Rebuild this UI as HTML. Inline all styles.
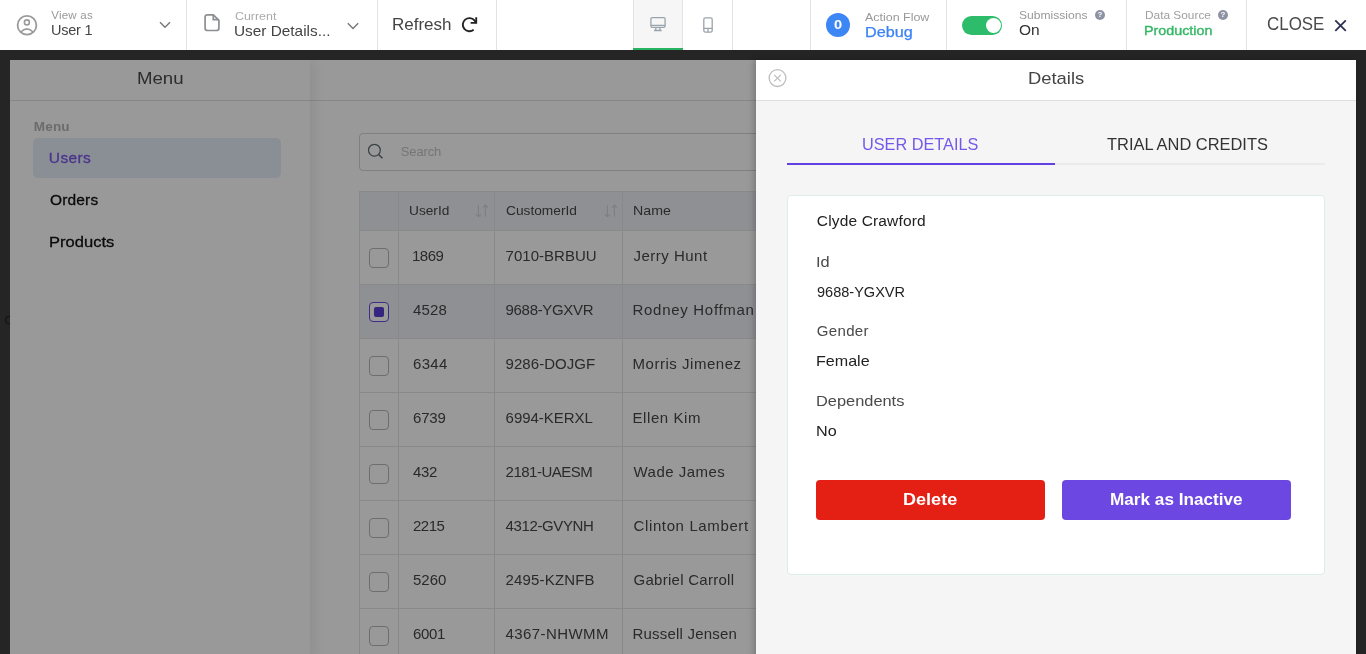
<!DOCTYPE html>
<html><head><meta charset="utf-8"><title>Details</title>
<style>
*{box-sizing:border-box}
html,body{margin:0;padding:0}
body{width:1366px;height:654px;overflow:hidden;position:relative;background:#252525;font-family:"Liberation Sans",sans-serif}
.t{position:absolute;white-space:nowrap;line-height:1}
.abs{position:absolute}
.vd{position:absolute;top:0;width:1px;height:50px;background:#e3e3e3}
</style></head><body>
<div class="abs" style="left:0;top:0;width:1366px;height:654px;overflow:hidden;background:#252525;will-change:transform">

<div class="abs" style="left:0;top:0;width:1366px;height:50px;background:#fff">
<div class="vd" style="left:186px"></div>
<div class="vd" style="left:377px"></div>
<div class="vd" style="left:496px"></div>
<div class="vd" style="left:732px"></div>
<div class="vd" style="left:810px"></div>
<div class="vd" style="left:946px"></div>
<div class="vd" style="left:1126px"></div>
<div class="vd" style="left:1246px"></div>
<div class="abs" style="left:633px;top:0;width:50px;height:50px;background:#f6f6f6;border-left:1px solid #e2e2ea;border-right:1px solid #e3e3e3"></div>
<div class="abs" style="left:633px;top:48px;width:50px;height:2px;background:#27b35f"></div>
</div>
<svg class="abs" style="left:16px;top:14px" width="22" height="23" viewBox="16 14 22 23">
<circle cx="27" cy="25.3" r="9.4" fill="none" stroke="#9a9a9a" stroke-width="1.8"/>
<circle cx="26.9" cy="22.4" r="2.5" fill="none" stroke="#9a9a9a" stroke-width="1.6"/>
<path d="M20.6 32.2 Q26.9 25.6 33.3 32.2" fill="none" stroke="#9a9a9a" stroke-width="1.6"/>
</svg>
<div class="t" style="left:51.20px;top:10.22px;font-size:11.5px;font-weight:400;color:#999;letter-spacing:0.248px;">View as</div>
<div class="t" style="left:51.00px;top:22.68px;font-size:14.5px;font-weight:400;color:#444;letter-spacing:-0.229px;">User 1</div>
<svg class="abs" style="left:158px;top:20px" width="14" height="11" viewBox="158 20 14 11"><path d="M160 22.3 L165 27.3 L170 22.3" fill="none" stroke="#777" stroke-width="1.4"/></svg>
<svg class="abs" style="left:202px;top:12px" width="20" height="22" viewBox="202 12 20 22">
<path d="M207.5 14.9 H213.4 L218.9 20.3 V28.2 Q218.9 30.5 216.6 30.5 H207.5 Q205.1 30.5 205.1 28.2 V17.2 Q205.1 14.9 207.5 14.9 Z" fill="none" stroke="#8b8f93" stroke-width="1.7" stroke-linejoin="round"/>
<path d="M213.3 14.9 V19.6 H218.9" fill="none" stroke="#8b8f93" stroke-width="1.7"/>
</svg>
<div class="t" style="left:235.30px;top:10.65px;font-size:11px;font-weight:400;color:#aaa;transform:scaleX(1.1277);transform-origin:0 0;">Current</div>
<div class="t" style="left:233.94px;top:23.68px;font-size:14.5px;font-weight:400;color:#444;transform:scaleX(1.0593);transform-origin:0 0;">User Details...</div>
<svg class="abs" style="left:341px;top:20px" width="20" height="13" viewBox="341 20 20 13"><path d="M347.8 23.3 L353 28.5 L358.2 23.3" fill="none" stroke="#777" stroke-width="1.4"/></svg>
<div class="t" style="left:392.00px;top:15.55px;font-size:17px;font-weight:400;color:#444;letter-spacing:-0.012px;">Refresh</div>
<svg class="abs" style="left:458px;top:14px" width="24" height="22" viewBox="458 14 24 22">
<path d="M473.64 29.76 A6.6 6.6 0 1 1 474.46 20.46 L476.2 22.9" fill="none" stroke="#222" stroke-width="1.9"/>
<path d="M476.2 17.2 V22.9 H470.6" fill="none" stroke="#222" stroke-width="1.9" stroke-linejoin="miter"/>
</svg>
<svg class="abs" style="left:648px;top:15px" width="20" height="18" viewBox="648 15 20 18">
<rect x="650.9" y="17.6" width="14.2" height="9.7" rx="1.3" fill="none" stroke="#9aa4ac" stroke-width="1.3"/>
<path d="M650.9 25.3 H665.1 M655.8 27.6 V30.2 M659.9 27.6 V30.2 M654 30.5 H661.7" fill="none" stroke="#9aa4ac" stroke-width="1.3"/>
</svg>
<svg class="abs" style="left:701px;top:15px" width="14" height="20" viewBox="701 15 14 20">
<rect x="703.8" y="17.9" width="8.4" height="14.3" rx="1.6" fill="none" stroke="#9aa4ac" stroke-width="1.3"/>
<path d="M703.8 28.3 H712.2 M708 28.3 V32.2" fill="none" stroke="#9aa4ac" stroke-width="1.3"/>
</svg>
<div class="abs" style="left:826px;top:13px;width:24px;height:24px;border-radius:12px;background:#3d86f6"></div>
<div class="t" style="left:826px;top:18.6px;width:24px;text-align:center;font-size:12px;font-weight:700;color:#fff;transform:scaleX(1.22)">0</div>
<div class="t" style="left:865.20px;top:12.22px;font-size:11.5px;font-weight:400;color:#999;transform:scaleX(1.0826);transform-origin:0 0;">Action Flow</div>
<div class="t" style="left:865.47px;top:24.84px;font-size:14.3px;font-weight:400;color:#3b82f6;transform:scaleX(1.1341);transform-origin:0 0;-webkit-text-stroke:0.25px #3b82f6;">Debug</div>
<div class="abs" style="left:962px;top:15.5px;width:40px;height:19.5px;border-radius:10px;background:#2dbd6a"></div>
<div class="abs" style="left:985.8px;top:17.8px;width:15.6px;height:15.6px;border-radius:8px;background:#fff"></div>
<div class="t" style="left:1019.40px;top:9.65px;font-size:11px;font-weight:400;color:#999;transform:scaleX(1.0993);transform-origin:0 0;">Submissions</div>
<div class="t" style="left:1019.00px;top:22.68px;font-size:14.5px;font-weight:400;color:#333;transform:scaleX(1.0685);transform-origin:0 0;">On</div>
<div class="abs" style="left:1094.6px;top:9.5px;width:10.6px;height:10.6px;border-radius:6px;background:#8e93a4"></div><div class="t" style="left:1094.6px;top:10.9px;width:10.6px;text-align:center;font-size:8px;font-weight:700;color:#fff">?</div>
<div class="t" style="left:1145.20px;top:9.65px;font-size:11px;font-weight:400;color:#a0a0a0;transform:scaleX(1.0782);transform-origin:0 0;">Data Source</div>
<div class="t" style="left:1144.14px;top:23.52px;font-size:13.5px;font-weight:400;color:#35b865;transform:scaleX(1.0598);transform-origin:0 0;-webkit-text-stroke:0.4px #35b865;">Production</div>
<div class="abs" style="left:1217.7px;top:9.9px;width:10.6px;height:10.6px;border-radius:6px;background:#8e93a4"></div><div class="t" style="left:1217.7px;top:11.3px;width:10.6px;text-align:center;font-size:8px;font-weight:700;color:#fff">?</div>
<div class="t" style="left:1266.80px;top:16.12px;font-size:17.5px;font-weight:400;color:#4a4a4a;transform:scaleX(0.9667);transform-origin:0 0;">CLOSE</div>
<svg class="abs" style="left:1332px;top:18px" width="16" height="16" viewBox="1332 18 16 16"><path d="M1335.3 20.3 L1345.8 30.8 M1345.8 20.3 L1335.3 30.8" fill="none" stroke="#2c3152" stroke-width="1.8"/></svg>
<svg class="abs" style="left:0;top:312px" width="12" height="16" viewBox="0 312 12 16"><path d="M10 316.3 Q5.6 316.3 5.6 320 Q5.6 323.7 10 323.7" fill="none" stroke="#141414" stroke-width="1.2"/></svg>
<div class="abs" style="left:10px;top:60px;width:1346px;height:600px;background:#fff;overflow:hidden">
<div class="abs" style="left:0;top:40px;width:1346px;height:1px;background:#e2e2e2"></div>
<div class="abs" style="left:349px;top:73px;width:700px;height:38px;border:1px solid #d4d4d4;border-radius:4px;background:#fff"></div>
<div class="abs" style="left:349px;top:131px;width:900px;height:39px;background:#eef1f5"></div>
<div class="abs" style="left:349px;top:224px;width:900px;height:54px;background:#edf1f7"></div>
<div class="abs" style="left:349px;top:131px;width:900px;height:1px;background:#e4e4e4"></div>
<div class="abs" style="left:349px;top:170px;width:900px;height:1px;background:#e4e4e4"></div>
<div class="abs" style="left:349px;top:224px;width:900px;height:1px;background:#e4e4e4"></div>
<div class="abs" style="left:349px;top:278px;width:900px;height:1px;background:#e4e4e4"></div>
<div class="abs" style="left:349px;top:332px;width:900px;height:1px;background:#e4e4e4"></div>
<div class="abs" style="left:349px;top:386px;width:900px;height:1px;background:#e4e4e4"></div>
<div class="abs" style="left:349px;top:440px;width:900px;height:1px;background:#e4e4e4"></div>
<div class="abs" style="left:349px;top:494px;width:900px;height:1px;background:#e4e4e4"></div>
<div class="abs" style="left:349px;top:548px;width:900px;height:1px;background:#e4e4e4"></div>
<div class="abs" style="left:349px;top:602px;width:900px;height:1px;background:#e4e4e4"></div>
<div class="abs" style="left:349px;top:131px;width:1px;height:600px;background:#e4e4e4"></div>
<div class="abs" style="left:388px;top:131px;width:1px;height:600px;background:#e4e4e4"></div>
<div class="abs" style="left:484px;top:131px;width:1px;height:600px;background:#e4e4e4"></div>
<div class="abs" style="left:612px;top:131px;width:1px;height:600px;background:#e4e4e4"></div>
<div class="abs" style="left:0;top:0;width:300px;height:600px;background:#fff;box-shadow:2px 0 14px rgba(0,0,0,0.09)"></div>
<div class="abs" style="left:0;top:40px;width:300px;height:1px;background:#e2e2e2"></div>
<div class="abs" style="left:23px;top:78px;width:248px;height:40px;border-radius:5px;background:#e7edf8"></div>
</div>
<div class="t" style="left:136.52px;top:70.38px;font-size:17.2px;font-weight:400;color:#4a4a4a;transform:scaleX(1.0836);transform-origin:0 0;">Menu</div>
<div class="t" style="left:33.80px;top:119.53px;font-size:13.5px;font-weight:700;color:#b4b4b4;letter-spacing:0.167px;">Menu</div>
<div class="t" style="left:48.80px;top:149.82px;font-size:15.5px;font-weight:400;color:#7a5ae8;letter-spacing:0.394px;-webkit-text-stroke:0.35px #7a5ae8;">Users</div>
<div class="t" style="left:50.00px;top:191.82px;font-size:15.5px;font-weight:400;color:#111;letter-spacing:0.156px;-webkit-text-stroke:0.3px #111;">Orders</div>
<div class="t" style="left:48.93px;top:233.82px;font-size:15.5px;font-weight:400;color:#111;transform:scaleX(1.0676);transform-origin:0 0;-webkit-text-stroke:0.3px #111;">Products</div>
<svg class="abs" style="left:364px;top:141px" width="22" height="20" viewBox="364 141 22 20">
<circle cx="374.4" cy="150.2" r="5.9" fill="none" stroke="#5f6b75" stroke-width="1.2"/>
<path d="M378.6 154.5 L382.4 158.3" fill="none" stroke="#5f6b75" stroke-width="1.5"/>
</svg>
<div class="t" style="left:400.80px;top:144.95px;font-size:13px;font-weight:400;color:#c4c4c4;letter-spacing:-0.152px;">Search</div>
<div class="t" style="left:408.65px;top:203.95px;font-size:13px;font-weight:400;color:#474747;transform:scaleX(1.0524);transform-origin:0 0;">UserId</div>
<div class="t" style="left:505.60px;top:203.95px;font-size:13px;font-weight:400;color:#474747;transform:scaleX(1.0559);transform-origin:0 0;">CustomerId</div>
<div class="t" style="left:632.61px;top:203.95px;font-size:13px;font-weight:400;color:#474747;transform:scaleX(1.0913);transform-origin:0 0;">Name</div>
<svg class="abs" style="left:475px;top:203px" width="16" height="16" viewBox="475 203 16 16"><path d="M478.4 205 V216.8 M475.9 214.2 L478.4 216.8 L480.9 214.2 M485.4 205 V216.8 M482.9 207.6 L485.4 205 L487.9 207.6" fill="none" stroke="#cfd2d6" stroke-width="1.1"/></svg>
<svg class="abs" style="left:604px;top:203px" width="16" height="16" viewBox="604 203 16 16"><path d="M607.4 205 V216.8 M604.9 214.2 L607.4 216.8 L609.9 214.2 M614.4 205 V216.8 M611.9 207.6 L614.4 205 L616.9 207.6" fill="none" stroke="#cfd2d6" stroke-width="1.1"/></svg>
<div class="abs" style="left:369px;top:248px;width:20px;height:20px;border:1.5px solid #b8b8b8;border-radius:4px;background:#fff"></div>
<div class="t" style="left:412.00px;top:248.25px;font-size:15px;color:#474747;letter-spacing:-0.500px">1869</div>
<div class="t" style="left:505.60px;top:248.25px;font-size:15px;color:#474747;letter-spacing:0.018px">7010-BRBUU</div>
<div class="t" style="left:633.50px;top:248.25px;font-size:15px;color:#474747;letter-spacing:0.487px">Jerry Hunt</div>
<div class="abs" style="left:369px;top:302px;width:20px;height:20px;border:1.5px solid #6b48e0;border-radius:4px;background:#fff"></div>
<div class="abs" style="left:374px;top:307px;width:10px;height:10px;border-radius:2px;background:#5a3ed6"></div>
<div class="t" style="left:413.00px;top:302.25px;font-size:15px;color:#474747;letter-spacing:0.158px">4528</div>
<div class="t" style="left:505.60px;top:302.25px;font-size:15px;color:#474747;letter-spacing:-0.327px">9688-YGXVR</div>
<div class="t" style="left:632.50px;top:302.25px;font-size:15px;color:#474747;letter-spacing:0.704px">Rodney Hoffman</div>
<div class="abs" style="left:369px;top:356px;width:20px;height:20px;border:1.5px solid #b8b8b8;border-radius:4px;background:#fff"></div>
<div class="t" style="left:413.00px;top:356.25px;font-size:15px;color:#474747;letter-spacing:0.324px">6344</div>
<div class="t" style="left:505.60px;top:356.25px;font-size:15px;color:#474747;letter-spacing:0.041px">9286-DOJGF</div>
<div class="t" style="left:632.50px;top:356.25px;font-size:15px;color:#474747;letter-spacing:0.532px">Morris Jimenez</div>
<div class="abs" style="left:369px;top:410px;width:20px;height:20px;border:1.5px solid #b8b8b8;border-radius:4px;background:#fff"></div>
<div class="t" style="left:413.00px;top:410.25px;font-size:15px;color:#474747;letter-spacing:-0.176px">6739</div>
<div class="t" style="left:505.60px;top:410.25px;font-size:15px;color:#474747;letter-spacing:-0.023px">6994-KERXL</div>
<div class="t" style="left:632.50px;top:410.25px;font-size:15px;color:#474747;letter-spacing:0.580px">Ellen Kim</div>
<div class="abs" style="left:369px;top:464px;width:20px;height:20px;border:1.5px solid #b8b8b8;border-radius:4px;background:#fff"></div>
<div class="t" style="left:413.00px;top:464.25px;font-size:15px;color:#474747;letter-spacing:-0.342px">432</div>
<div class="t" style="left:505.60px;top:464.25px;font-size:15px;color:#474747;letter-spacing:-0.500px">2181-UAESM</div>
<div class="t" style="left:633.50px;top:464.25px;font-size:15px;color:#474747;letter-spacing:0.481px">Wade James</div>
<div class="abs" style="left:369px;top:518px;width:20px;height:20px;border:1.5px solid #b8b8b8;border-radius:4px;background:#fff"></div>
<div class="t" style="left:413.00px;top:518.25px;font-size:15px;color:#474747;letter-spacing:-0.500px">2215</div>
<div class="t" style="left:505.60px;top:518.25px;font-size:15px;color:#474747;letter-spacing:-0.386px">4312-GVYNH</div>
<div class="t" style="left:633.50px;top:518.25px;font-size:15px;color:#474747;letter-spacing:0.627px">Clinton Lambert</div>
<div class="abs" style="left:369px;top:572px;width:20px;height:20px;border:1.5px solid #b8b8b8;border-radius:4px;background:#fff"></div>
<div class="t" style="left:413.00px;top:572.25px;font-size:15px;color:#474747;letter-spacing:-0.009px">5260</div>
<div class="t" style="left:505.60px;top:572.25px;font-size:15px;color:#474747;letter-spacing:0.164px">2495-KZNFB</div>
<div class="t" style="left:633.50px;top:572.25px;font-size:15px;color:#474747;letter-spacing:0.274px">Gabriel Carroll</div>
<div class="abs" style="left:369px;top:626px;width:20px;height:20px;border:1.5px solid #b8b8b8;border-radius:4px;background:#fff"></div>
<div class="t" style="left:413.00px;top:626.25px;font-size:15px;color:#474747;letter-spacing:-0.342px">6001</div>
<div class="t" style="left:505.60px;top:626.25px;font-size:15px;color:#474747;letter-spacing:0.413px">4367-NHWMM</div>
<div class="t" style="left:632.50px;top:626.25px;font-size:15px;color:#474747;letter-spacing:0.210px">Russell Jensen</div>
<div class="abs" style="left:10px;top:60px;width:1346px;height:600px;background:rgba(0,0,0,0.4)"></div>
<div class="abs" style="left:756px;top:60px;width:600px;height:600px;background:#f5f5f5;box-shadow:-2px 0 6px rgba(0,0,0,0.22)"></div>
<div class="abs" style="left:756px;top:60px;width:600px;height:41px;background:#fff;border-bottom:1px solid #dedede"></div>
<svg class="abs" style="left:766px;top:67px" width="23" height="23" viewBox="766 67 23 23">
<circle cx="777.5" cy="78.1" r="8.4" fill="none" stroke="#bdbdbd" stroke-width="1.3"/>
<path d="M774.2 74.8 L780.8 81.4 M780.8 74.8 L774.2 81.4" fill="none" stroke="#bdbdbd" stroke-width="1.2"/>
</svg>
<div class="t" style="left:1027.92px;top:69.55px;font-size:17px;font-weight:400;color:#444;transform:scaleX(1.0820);transform-origin:0 0;">Details</div>
<div class="abs" style="left:787px;top:163px;width:538px;height:2px;background:#ebebeb"></div>
<div class="abs" style="left:787px;top:163px;width:268px;height:2px;background:#6042e2"></div>
<div class="t" style="left:862.14px;top:135.55px;font-size:17px;font-weight:400;color:#7358ea;transform:scaleX(0.9575);transform-origin:0 0;">USER DETAILS</div>
<div class="t" style="left:1107.20px;top:135.55px;font-size:17px;font-weight:400;color:#333;transform:scaleX(0.9661);transform-origin:0 0;">TRIAL AND CREDITS</div>
<div class="abs" style="left:787px;top:195px;width:538px;height:380px;background:#fff;border:1px solid #ddeee8;border-radius:4px"></div>
<div class="t" style="left:816.80px;top:212.82px;font-size:15.5px;font-weight:400;color:#222;letter-spacing:0.154px;">Clyde Crawford</div>
<div class="t" style="left:815.71px;top:254.25px;font-size:15px;font-weight:400;color:#4a4a4a;transform:scaleX(1.0925);transform-origin:0 0;">Id</div>
<div class="t" style="left:816.80px;top:284.25px;font-size:15px;font-weight:400;color:#222;transform:scaleX(0.9687);transform-origin:0 0;">9688-YGXVR</div>
<div class="t" style="left:816.80px;top:323.25px;font-size:15px;font-weight:400;color:#4a4a4a;letter-spacing:0.333px;">Gender</div>
<div class="t" style="left:815.73px;top:353.25px;font-size:15px;font-weight:400;color:#222;transform:scaleX(1.0724);transform-origin:0 0;">Female</div>
<div class="t" style="left:815.71px;top:393.25px;font-size:15px;font-weight:400;color:#4a4a4a;transform:scaleX(1.0920);transform-origin:0 0;">Dependents</div>
<div class="t" style="left:815.72px;top:423.25px;font-size:15px;font-weight:400;color:#222;transform:scaleX(1.0767);transform-origin:0 0;">No</div>
<div class="abs" style="left:816px;top:480px;width:229px;height:40px;border-radius:4px;background:#e32013"></div>
<div class="abs" style="left:1062px;top:480px;width:229px;height:40px;border-radius:4px;background:#6c47e1"></div>
<div class="t" style="left:903.31px;top:490.98px;font-size:16.5px;font-weight:700;color:#fff;transform:scaleX(1.0942);transform-origin:0 0;">Delete</div>
<div class="t" style="left:1109.56px;top:490.98px;font-size:16.5px;font-weight:700;color:#fff;transform:scaleX(1.0403);transform-origin:0 0;">Mark as Inactive</div>
</div></body></html>
